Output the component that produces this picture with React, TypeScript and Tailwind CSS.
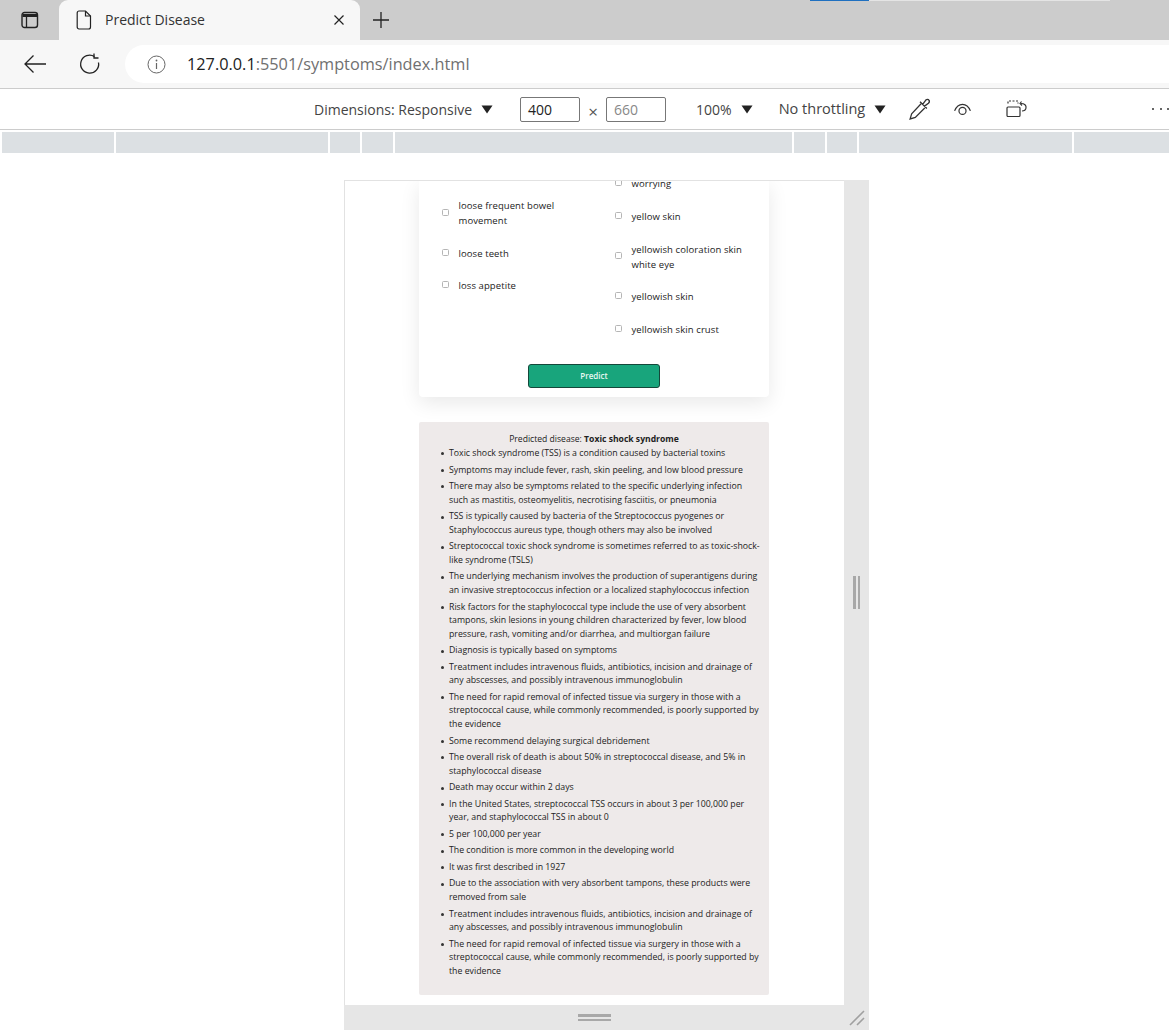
import React from "react";

const bullets = [
  "Toxic shock syndrome (TSS) is a condition caused by bacterial toxins",
  "Symptoms may include fever, rash, skin peeling, and low blood pressure",
  "There may also be symptoms related to the specific underlying infection such as mastitis, osteomyelitis, necrotising fasciitis, or pneumonia",
  "TSS is typically caused by bacteria of the Streptococcus pyogenes or Staphylococcus aureus type, though others may also be involved",
  "Streptococcal toxic shock syndrome is sometimes referred to as toxic-shock-like syndrome (TSLS)",
  "The underlying mechanism involves the production of superantigens during an invasive streptococcus infection or a localized staphylococcus infection",
  "Risk factors for the staphylococcal type include the use of very absorbent tampons, skin lesions in young children characterized by fever, low blood pressure, rash, vomiting and/or diarrhea, and multiorgan failure",
  "Diagnosis is typically based on symptoms",
  "Treatment includes intravenous fluids, antibiotics, incision and drainage of any abscesses, and possibly intravenous immunoglobulin",
  "The need for rapid removal of infected tissue via surgery in those with a streptococcal cause, while commonly recommended, is poorly supported by the evidence",
  "Some recommend delaying surgical debridement",
  "The overall risk of death is about 50% in streptococcal disease, and 5% in staphylococcal disease",
  "Death may occur within 2 days",
  "In the United States, streptococcal TSS occurs in about 3 per 100,000 per year, and staphylococcal TSS in about 0",
  "5 per 100,000 per year",
  "The condition is more common in the developing world",
  "It was first described in 1927",
  "Due to the association with very absorbent tampons, these products were removed from sale",
  "Treatment includes intravenous fluids, antibiotics, incision and drainage of any abscesses, and possibly intravenous immunoglobulin",
  "The need for rapid removal of infected tissue via surgery in those with a streptococcal cause, while commonly recommended, is poorly supported by the evidence",
];

const rulerWidths = [112, 212, 30, 31, 397, 31, 30, 213, 97];

function Check({ label, cls }: { label: React.ReactNode; cls: string }) {
  return (
    <div className={`flex items-center ${cls}`}>
      <span className="w-[7px] h-[7px] mb-[2px] border border-[#b5b5b5] rounded-[1.5px] bg-white shrink-0" />
      <span className="ml-[9.5px] text-[9.5px] leading-[15px] tracking-[0.09px] text-[#222222]">{label}</span>
    </div>
  );
}

function Caret() {
  return (
    <svg width="12" height="9" viewBox="0 0 12 9" className="shrink-0">
      <path d="M0.5 0.5H11.5L6 8.5Z" fill="#222222" />
    </svg>
  );
}

export default function App() {
  return (
    <div className="relative w-[1169px] h-[1030px] overflow-hidden bg-white font-['Open_Sans','Noto_Sans',sans-serif]">
      {/* stray top-of-window edge */}
      <div className="absolute left-[810px] top-0 h-px w-[59px] bg-[#1f70c0]" />
      <div className="absolute left-[869px] top-0 h-px w-[241px] bg-[#e4e4e4]" />

      {/* tab strip */}
      <div className="h-[40px] bg-[#cccccc] flex items-end">
        <div className="w-[59px] h-[40px] flex items-center justify-center">
          <svg width="18" height="18" viewBox="0 0 18 18" fill="none">
            <rect x="1" y="1.5" width="15.5" height="15" rx="2.5" stroke="#222" strokeWidth="1.4" />
            <path d="M1.5 4.5H16" stroke="#222" strokeWidth="3" />
            <path d="M5.5 5V16" stroke="#222" strokeWidth="1.3" />
          </svg>
        </div>
        <div className="w-[301px] h-[40px] bg-[#f7f7f7] rounded-t-[9px] flex items-center pl-[17px] pr-[15px]">
          <svg width="16" height="20" viewBox="0 0 16 20" fill="none" className="shrink-0">
            <path d="M3 1H9.5L14.5 6V17C14.5 18 13.8 19 12.5 19H3C2 19 1.2 18 1.2 17V3C1.2 2 2 1 3 1Z" stroke="#222" strokeWidth="1.2" />
            <path d="M9.5 1V6H14.5" stroke="#222" strokeWidth="1.2" />
          </svg>
          <span className="ml-[13px] mb-[2px] flex-1 text-[14px] text-[#333333]">Predict Disease</span>
          <svg width="12" height="12" viewBox="0 0 12 12" fill="none">
            <path d="M1.5 1.5L10.5 10.5M10.5 1.5L1.5 10.5" stroke="#222" strokeWidth="1.2" />
          </svg>
        </div>
        <div className="h-[40px] flex items-center ml-[12px]">
          <svg width="18" height="18" viewBox="0 0 18 18" fill="none">
            <path d="M9 1V17M1 9H17" stroke="#222" strokeWidth="1.3" />
          </svg>
        </div>
      </div>

      {/* address bar */}
      <div className="h-[48px] bg-[#f7f7f7] border-b border-[#cccccc] box-content flex items-center pl-[23px]">
        <svg width="24" height="20" viewBox="0 0 24 20" fill="none" className="shrink-0">
          <path d="M23 10H2M10.5 1.5L2 10L10.5 18.5" stroke="#222" strokeWidth="1.3" />
        </svg>
        <svg width="22" height="22" viewBox="0 0 22 22" fill="none" className="ml-[32px] shrink-0">
          <path d="M19.5 9.5A9 9 0 1 1 15.5 3.6" stroke="#222" strokeWidth="1.3" />
          <path d="M15 0.5V5H19.5" stroke="#222" strokeWidth="1.3" />
        </svg>
        <div className="ml-[24px] flex-1 h-[38px] bg-white rounded-l-[19px] flex items-center pl-[22px]">
          <svg width="19" height="19" viewBox="0 0 19 19" fill="none" className="shrink-0">
            <circle cx="9.5" cy="9.5" r="8.5" stroke="#666" strokeWidth="1" />
            <path d="M9.5 8V14" stroke="#666" strokeWidth="1.2" />
            <circle cx="9.5" cy="5.5" r="0.9" fill="#666" />
          </svg>
          <span className="ml-[21px] text-[16.3px] text-[#222222]">
            127.0.0.1<span className="text-[#707070]">:5501/symptoms/index.html</span>
          </span>
        </div>
      </div>

      {/* device toolbar */}
      <div className="h-[40px] bg-white border-b border-[#cccccc] box-content flex items-center pl-[314px] text-[#444444] whitespace-nowrap">
        <span className="text-[14px] shrink-0">Dimensions: Responsive</span>
        <span className="ml-[9px] shrink-0"><Caret /></span>
        <div className="ml-[27px] w-[60px] h-[25px] shrink-0 border border-[#777777] rounded-[2px] flex items-center pl-[7px] text-[14px] text-[#222222]">400</div>
        <span className="ml-[7px] w-[12px] shrink-0 text-center text-[17px] leading-none text-[#555555] mt-[5px]">×</span>
        <div className="ml-[7px] w-[60px] h-[25px] shrink-0 border border-[#777777] rounded-[2px] flex items-center pl-[7px] text-[14px] text-[#888888]">660</div>
        <span className="ml-[30px] text-[14px] shrink-0">100%</span>
        <span className="ml-[9px] shrink-0"><Caret /></span>
        <span className="ml-[26px] text-[14.5px] shrink-0">No throttling</span>
        <span className="ml-[9px] shrink-0"><Caret /></span>
        <svg width="21" height="22" viewBox="0 0 20 21" fill="none" className="ml-[23px] shrink-0">
          <path d="M11.5 5.5L2.5 15L1 20L6 18.5L15 9.5" stroke="#333" strokeWidth="1.2" />
          <path d="M10.5 3.5L17 10M13 6L16 2C17 1 18.5 1 19 2C19.7 3 19.5 4 18.5 5L14.5 8" stroke="#333" strokeWidth="1.3" />
        </svg>
        <svg width="19" height="13" viewBox="0 0 20 14" fill="none" className="ml-[23px] shrink-0">
          <path d="M1.5 8.5C3.5 3.5 7 1.5 10 1.5C13 1.5 16.5 3.5 18.5 8.5" stroke="#333" strokeWidth="1.3" />
          <circle cx="10" cy="8.5" r="3.8" stroke="#333" strokeWidth="1.3" />
        </svg>
        <svg width="22" height="18" viewBox="0 0 22 18" fill="none" className="ml-[34px] shrink-0">
          <path d="M2 3.5V1H12V3.5" stroke="#333" strokeWidth="1.2" strokeDasharray="2 1.5" />
          <rect x="1" y="7" width="13" height="9.5" rx="1" stroke="#333" strokeWidth="1.2" />
          <path d="M15 3.5C18.5 3.5 20.5 5.5 20 8C19.7 10 18 11 16 11" stroke="#333" strokeWidth="1.2" />
          <path d="M15.5 1.5L14 3.5L16 5.5" stroke="#333" strokeWidth="1.1" />
        </svg>
        <div className="ml-[124px] flex gap-[5.5px] shrink-0">
          <span className="w-[2px] h-[2px] rounded-full bg-[#333]" />
          <span className="w-[2px] h-[2px] rounded-full bg-[#333]" />
          <span className="w-[2px] h-[2px] rounded-full bg-[#333]" />
        </div>
      </div>

      {/* media query ruler */}
      <div className="h-[21px] mt-[2px] ml-[2px] flex gap-[2px] overflow-hidden">
        {rulerWidths.map((w, i) => (
          <div key={i} className="h-full bg-[#dce0e3] shrink-0" style={{ width: w }} />
        ))}
      </div>

      {/* device frame */}
      <div className="mt-[27px] ml-[344px] w-[525px] h-[850px] flex flex-col">
        <div className="flex h-[825px]">
          <div className="w-[500px] h-full bg-white border-l border-t border-[#e2e2e2] overflow-hidden flex flex-col items-center pr-[1px]">
            {/* card */}
            <div className="w-[350px] h-[216px] shrink-0 bg-white rounded-b-[4px] shadow-[0_6px_20px_rgba(0,0,0,0.09)] flex flex-col overflow-hidden">
              <div className="flex">
                <div className="w-[173px] pl-[23px] pt-[17px]">
                  <Check cls="h-[30px] mb-[18px]" label={<>loose frequent bowel<br />movement</>} />
                  <Check cls="h-[15px] mb-[17px]" label="loose teeth" />
                  <Check cls="h-[15px]" label="loss appetite" />
                </div>
                <div className="flex-1 pl-[23px] mt-[-5px]">
                  <Check cls="h-[15px] mb-[17.5px]" label="worrying" />
                  <Check cls="h-[15px] mb-[18px]" label="yellow skin" />
                  <Check cls="h-[30px] mb-[17.5px]" label={<>yellowish coloration skin<br />white eye</>} />
                  <Check cls="h-[15px] mb-[18px]" label="yellowish skin" />
                  <Check cls="h-[15px]" label="yellowish skin crust" />
                </div>
              </div>
              <div className="flex justify-center mt-[27px]">
                <button className="w-[132px] h-[24px] bg-[#18a57c] border border-[#14483a] rounded-[3px] text-[8px] font-semibold text-[#e8f8f2]">
                  Predict
                </button>
              </div>
            </div>
            {/* result */}
            <div className="w-[350px] h-[573px] shrink-0 mt-[25px] bg-[#eeeaea] rounded-[2px] pt-[11px] text-[#222222]">
              <div className="text-center text-[8.6px] leading-[13.6px] mb-[0.5px]">
                Predicted disease: <b className="font-bold">Toxic shock syndrome</b>
              </div>
              <ul className="pl-[21px] pr-[9px] text-[8.75px] leading-[13.6px]">
                {bullets.map((b, i) => (
                  <li key={i} className="flex mb-[2.93px]">
                    <span className="w-[9px] h-[13.6px] flex items-center shrink-0">
                      <span className="ml-[0.5px] w-[3px] h-[3px] rounded-full bg-[#333333]" />
                    </span>
                    <span>{b}</span>
                  </li>
                ))}
              </ul>
            </div>
          </div>
          {/* right handle */}
          <div className="w-[25px] h-full bg-[#e6e6e6] flex items-center justify-center">
            <div className="flex gap-[2px] h-[33px]">
              <span className="w-[2.5px] h-full bg-[#a8a8a8]" />
              <span className="w-[2.5px] h-full bg-[#a8a8a8]" />
            </div>
          </div>
        </div>
        {/* bottom handle */}
        <div className="relative h-[25px] bg-[#e6e6e6] flex flex-col items-center justify-center gap-[2px] pr-[25px]">
          <span className="w-[33px] h-[2.5px] bg-[#a8a8a8]" />
          <span className="w-[33px] h-[2.5px] bg-[#a8a8a8]" />
          <svg width="16" height="16" viewBox="0 0 16 16" fill="none" className="absolute right-[4px] top-[5px]">
            <path d="M1 15L15 1M8 15L15 8" stroke="#a0a0a0" strokeWidth="1.6" />
          </svg>
        </div>
      </div>
    </div>
  );
}
